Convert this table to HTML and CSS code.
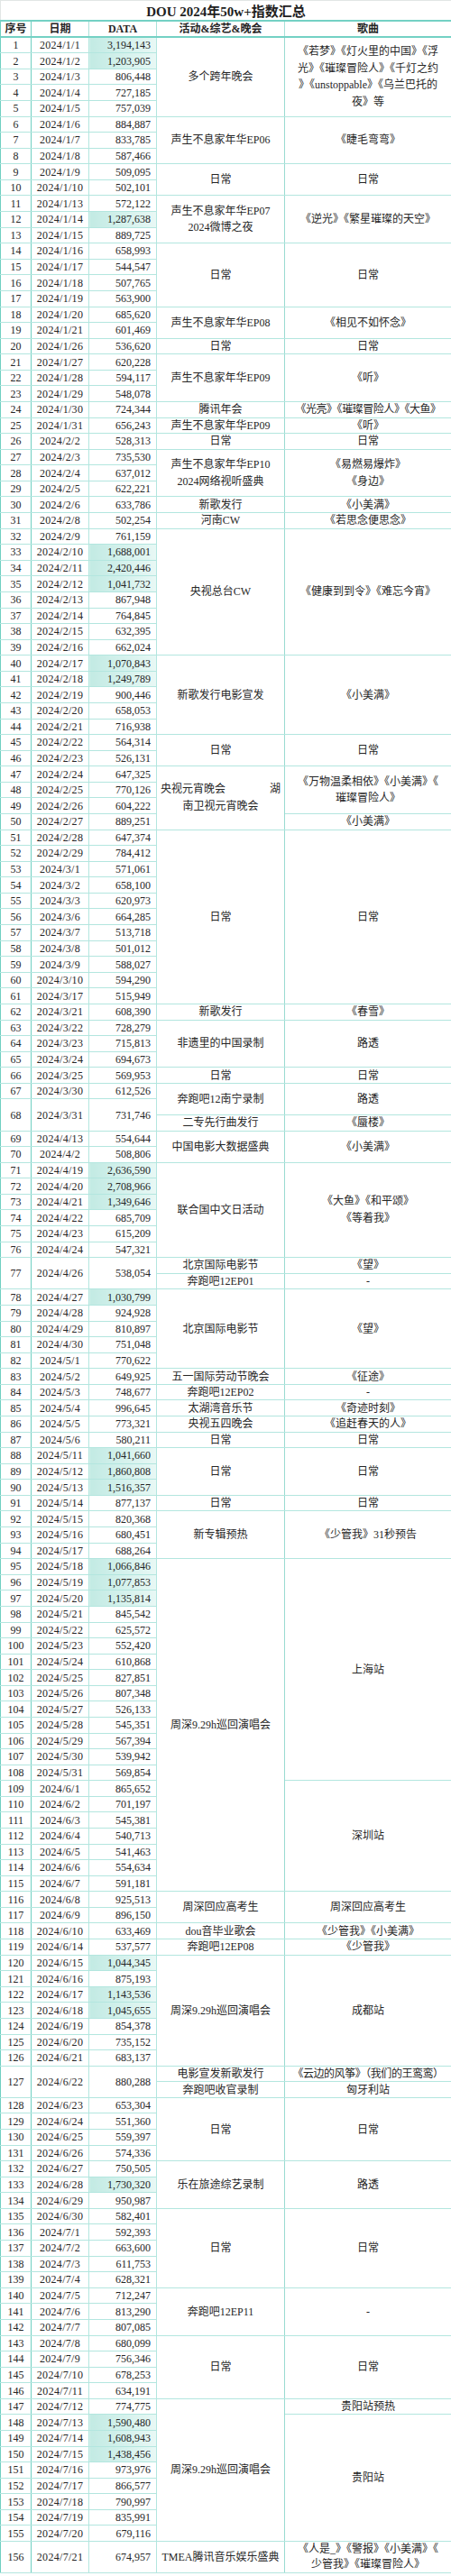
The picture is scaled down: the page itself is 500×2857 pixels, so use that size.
FILE: index.html
```html
<!DOCTYPE html>
<html lang="zh-CN">
<head>
<meta charset="utf-8">
<title>DOU 2024年50w+指数汇总</title>
<link rel="stylesheet" href="styles.css">
</head>
<body>
<table class="sheet">
<colgroup><col class="c1"><col class="c2"><col class="c3"><col class="c4"><col class="c5"></colgroup>
<thead>
<tr class="title"><th colspan="5">DOU 2024年50w+指数汇总</th></tr>
<tr class="head"><th class="n">序号</th><th>日期</th><th>DATA</th><th>活动&amp;综艺&amp;晚会</th><th class="s">歌曲</th></tr>
</thead>
<tbody>
<tr><td class="n">1</td><td class="d">2024/1/1</td><td class="v hi">3,194,143</td><td class="a" rowspan="5">多个跨年晚会</td><td class="s ml" rowspan="5">《若梦》《灯火里的中国》《浮<br>光》《璀璨冒险人》《千灯之约<br>》《unstoppable》《乌兰巴托的<br>夜》等</td></tr>
<tr><td class="n">2</td><td class="d">2024/1/2</td><td class="v hi">1,203,905</td></tr>
<tr><td class="n">3</td><td class="d">2024/1/3</td><td class="v">806,448</td></tr>
<tr><td class="n">4</td><td class="d">2024/1/4</td><td class="v">727,185</td></tr>
<tr><td class="n">5</td><td class="d">2024/1/5</td><td class="v">757,039</td></tr>
<tr><td class="n">6</td><td class="d">2024/1/6</td><td class="v">884,887</td><td class="a" rowspan="3">声生不息家年华EP06</td><td class="s" rowspan="3">《睫毛弯弯》</td></tr>
<tr><td class="n">7</td><td class="d">2024/1/7</td><td class="v">833,785</td></tr>
<tr><td class="n">8</td><td class="d">2024/1/8</td><td class="v">587,466</td></tr>
<tr><td class="n">9</td><td class="d">2024/1/9</td><td class="v">509,095</td><td class="a" rowspan="2">日常</td><td class="s" rowspan="2">日常</td></tr>
<tr><td class="n">10</td><td class="d">2024/1/10</td><td class="v">502,101</td></tr>
<tr><td class="n">11</td><td class="d">2024/1/13</td><td class="v">572,122</td><td class="a ml" rowspan="3">声生不息家年华EP07<br>2024微博之夜</td><td class="s" rowspan="3">《逆光》《繁星璀璨的天空》</td></tr>
<tr><td class="n">12</td><td class="d">2024/1/14</td><td class="v hi">1,287,638</td></tr>
<tr><td class="n">13</td><td class="d">2024/1/15</td><td class="v">889,725</td></tr>
<tr><td class="n">14</td><td class="d">2024/1/16</td><td class="v">658,993</td><td class="a" rowspan="4">日常</td><td class="s" rowspan="4">日常</td></tr>
<tr><td class="n">15</td><td class="d">2024/1/17</td><td class="v">544,547</td></tr>
<tr><td class="n">16</td><td class="d">2024/1/18</td><td class="v">507,765</td></tr>
<tr><td class="n">17</td><td class="d">2024/1/19</td><td class="v">563,900</td></tr>
<tr><td class="n">18</td><td class="d">2024/1/20</td><td class="v">685,620</td><td class="a" rowspan="2">声生不息家年华EP08</td><td class="s" rowspan="2">《相见不如怀念》</td></tr>
<tr><td class="n">19</td><td class="d">2024/1/21</td><td class="v">601,469</td></tr>
<tr><td class="n">20</td><td class="d">2024/1/26</td><td class="v">536,620</td><td class="a">日常</td><td class="s">日常</td></tr>
<tr><td class="n">21</td><td class="d">2024/1/27</td><td class="v">620,228</td><td class="a" rowspan="3">声生不息家年华EP09</td><td class="s" rowspan="3">《听》</td></tr>
<tr><td class="n">22</td><td class="d">2024/1/28</td><td class="v">594,117</td></tr>
<tr><td class="n">23</td><td class="d">2024/1/29</td><td class="v">548,078</td></tr>
<tr><td class="n">24</td><td class="d">2024/1/30</td><td class="v">724,344</td><td class="a">腾讯年会</td><td class="s tight">《光亮》《璀璨冒险人》《大鱼》</td></tr>
<tr><td class="n">25</td><td class="d">2024/1/31</td><td class="v">656,243</td><td class="a">声生不息家年华EP09</td><td class="s">《听》</td></tr>
<tr><td class="n">26</td><td class="d">2024/2/2</td><td class="v">528,313</td><td class="a">日常</td><td class="s">日常</td></tr>
<tr><td class="n">27</td><td class="d">2024/2/3</td><td class="v">735,530</td><td class="a ml" rowspan="3">声生不息家年华EP10<br>2024网络视听盛典</td><td class="s ml" rowspan="3">《易燃易爆炸》<br>《身边》</td></tr>
<tr><td class="n">28</td><td class="d">2024/2/4</td><td class="v">637,012</td></tr>
<tr><td class="n">29</td><td class="d">2024/2/5</td><td class="v">622,221</td></tr>
<tr><td class="n">30</td><td class="d">2024/2/6</td><td class="v">633,786</td><td class="a">新歌发行</td><td class="s">《小美满》</td></tr>
<tr><td class="n">31</td><td class="d">2024/2/8</td><td class="v">502,254</td><td class="a">河南CW</td><td class="s">《若思念便思念》</td></tr>
<tr><td class="n">32</td><td class="d">2024/2/9</td><td class="v">761,159</td><td class="a" rowspan="8">央视总台CW</td><td class="s" rowspan="8">《健康到到令》《难忘今宵》</td></tr>
<tr><td class="n">33</td><td class="d">2024/2/10</td><td class="v hi">1,688,001</td></tr>
<tr><td class="n">34</td><td class="d">2024/2/11</td><td class="v hi">2,420,446</td></tr>
<tr><td class="n">35</td><td class="d">2024/2/12</td><td class="v hi">1,041,732</td></tr>
<tr><td class="n">36</td><td class="d">2024/2/13</td><td class="v">867,948</td></tr>
<tr><td class="n">37</td><td class="d">2024/2/14</td><td class="v">764,845</td></tr>
<tr><td class="n">38</td><td class="d">2024/2/15</td><td class="v">632,395</td></tr>
<tr><td class="n">39</td><td class="d">2024/2/16</td><td class="v">662,024</td></tr>
<tr><td class="n">40</td><td class="d">2024/2/17</td><td class="v hi">1,070,843</td><td class="a" rowspan="5">新歌发行电影宣发</td><td class="s" rowspan="5">《小美满》</td></tr>
<tr><td class="n">41</td><td class="d">2024/2/18</td><td class="v hi">1,249,789</td></tr>
<tr><td class="n">42</td><td class="d">2024/2/19</td><td class="v">900,446</td></tr>
<tr><td class="n">43</td><td class="d">2024/2/20</td><td class="v">658,053</td></tr>
<tr><td class="n">44</td><td class="d">2024/2/21</td><td class="v">716,938</td></tr>
<tr><td class="n">45</td><td class="d">2024/2/22</td><td class="v">564,314</td><td class="a" rowspan="2">日常</td><td class="s" rowspan="2">日常</td></tr>
<tr><td class="n">46</td><td class="d">2024/2/23</td><td class="v">526,131</td></tr>
<tr><td class="n">47</td><td class="d">2024/2/24</td><td class="v">647,325</td><td class="a ml" rowspan="4"><span class="split"><span>央视元宵晚会</span><span>湖</span></span>南卫视元宵晚会</td><td class="s ml" rowspan="3">《万物温柔相依》《小美满》《<br>璀璨冒险人》</td></tr>
<tr><td class="n">48</td><td class="d">2024/2/25</td><td class="v">770,126</td></tr>
<tr><td class="n">49</td><td class="d">2024/2/26</td><td class="v">604,222</td></tr>
<tr><td class="n">50</td><td class="d">2024/2/27</td><td class="v">889,251</td><td class="s">《小美满》</td></tr>
<tr><td class="n">51</td><td class="d">2024/2/28</td><td class="v">647,374</td><td class="a" rowspan="11">日常</td><td class="s" rowspan="11">日常</td></tr>
<tr><td class="n">52</td><td class="d">2024/2/29</td><td class="v">784,412</td></tr>
<tr><td class="n">53</td><td class="d">2024/3/1</td><td class="v">571,061</td></tr>
<tr><td class="n">54</td><td class="d">2024/3/2</td><td class="v">658,100</td></tr>
<tr><td class="n">55</td><td class="d">2024/3/3</td><td class="v">620,973</td></tr>
<tr><td class="n">56</td><td class="d">2024/3/6</td><td class="v">664,285</td></tr>
<tr><td class="n">57</td><td class="d">2024/3/7</td><td class="v">513,718</td></tr>
<tr><td class="n">58</td><td class="d">2024/3/8</td><td class="v">501,012</td></tr>
<tr><td class="n">59</td><td class="d">2024/3/9</td><td class="v">588,027</td></tr>
<tr><td class="n">60</td><td class="d">2024/3/10</td><td class="v">594,290</td></tr>
<tr><td class="n">61</td><td class="d">2024/3/17</td><td class="v">515,949</td></tr>
<tr><td class="n">62</td><td class="d">2024/3/21</td><td class="v">608,390</td><td class="a">新歌发行</td><td class="s">《春雪》</td></tr>
<tr><td class="n">63</td><td class="d">2024/3/22</td><td class="v">728,279</td><td class="a" rowspan="3">非遗里的中国录制</td><td class="s" rowspan="3">路透</td></tr>
<tr><td class="n">64</td><td class="d">2024/3/23</td><td class="v">715,813</td></tr>
<tr><td class="n">65</td><td class="d">2024/3/24</td><td class="v">694,673</td></tr>
<tr><td class="n">66</td><td class="d">2024/3/25</td><td class="v">569,953</td><td class="a">日常</td><td class="s">日常</td></tr>
<tr><td class="n">67</td><td class="d">2024/3/30</td><td class="v">612,526</td><td class="a" rowspan="2">奔跑吧12南宁录制</td><td class="s" rowspan="2">路透</td></tr>
<tr><td class="n" rowspan="2">68</td><td class="d" rowspan="2">2024/3/31</td><td class="v" rowspan="2">731,746</td></tr>
<tr><td class="a">二专先行曲发行</td><td class="s">《蜃楼》</td></tr>
<tr><td class="n">69</td><td class="d">2024/4/13</td><td class="v">554,644</td><td class="a" rowspan="2">中国电影大数据盛典</td><td class="s" rowspan="2">《小美满》</td></tr>
<tr><td class="n">70</td><td class="d">2024/4/2</td><td class="v">508,806</td></tr>
<tr><td class="n">71</td><td class="d">2024/4/19</td><td class="v hi">2,636,590</td><td class="a" rowspan="6">联合国中文日活动</td><td class="s ml" rowspan="6">《大鱼》《和平颂》<br>《等着我》</td></tr>
<tr><td class="n">72</td><td class="d">2024/4/20</td><td class="v hi">2,708,966</td></tr>
<tr><td class="n">73</td><td class="d">2024/4/21</td><td class="v hi">1,349,646</td></tr>
<tr><td class="n">74</td><td class="d">2024/4/22</td><td class="v">685,709</td></tr>
<tr><td class="n">75</td><td class="d">2024/4/23</td><td class="v">615,209</td></tr>
<tr><td class="n">76</td><td class="d">2024/4/24</td><td class="v">547,321</td></tr>
<tr><td class="n" rowspan="2">77</td><td class="d" rowspan="2">2024/4/26</td><td class="v" rowspan="2">538,054</td><td class="a">北京国际电影节</td><td class="s">《望》</td></tr>
<tr><td class="a">奔跑吧12EP01</td><td class="s">-</td></tr>
<tr><td class="n">78</td><td class="d">2024/4/27</td><td class="v hi">1,030,799</td><td class="a" rowspan="5">北京国际电影节</td><td class="s" rowspan="5">《望》</td></tr>
<tr><td class="n">79</td><td class="d">2024/4/28</td><td class="v">924,928</td></tr>
<tr><td class="n">80</td><td class="d">2024/4/29</td><td class="v">810,897</td></tr>
<tr><td class="n">81</td><td class="d">2024/4/30</td><td class="v">751,048</td></tr>
<tr><td class="n">82</td><td class="d">2024/5/1</td><td class="v">770,622</td></tr>
<tr><td class="n">83</td><td class="d">2024/5/2</td><td class="v">649,925</td><td class="a">五一国际劳动节晚会</td><td class="s">《征途》</td></tr>
<tr><td class="n">84</td><td class="d">2024/5/3</td><td class="v">748,677</td><td class="a">奔跑吧12EP02</td><td class="s">-</td></tr>
<tr><td class="n">85</td><td class="d">2024/5/4</td><td class="v">996,645</td><td class="a">太湖湾音乐节</td><td class="s">《奇迹时刻》</td></tr>
<tr><td class="n">86</td><td class="d">2024/5/5</td><td class="v">773,321</td><td class="a">央视五四晚会</td><td class="s">《追赶春天的人》</td></tr>
<tr><td class="n">87</td><td class="d">2024/5/6</td><td class="v">580,211</td><td class="a">日常</td><td class="s">日常</td></tr>
<tr><td class="n">88</td><td class="d">2024/5/11</td><td class="v hi">1,041,660</td><td class="a" rowspan="3">日常</td><td class="s" rowspan="3">日常</td></tr>
<tr><td class="n">89</td><td class="d">2024/5/12</td><td class="v hi">1,860,808</td></tr>
<tr><td class="n">90</td><td class="d">2024/5/13</td><td class="v hi">1,516,357</td></tr>
<tr><td class="n">91</td><td class="d">2024/5/14</td><td class="v">877,137</td><td class="a">日常</td><td class="s">日常</td></tr>
<tr><td class="n">92</td><td class="d">2024/5/15</td><td class="v">820,368</td><td class="a" rowspan="3">新专辑预热</td><td class="s" rowspan="3">《少管我》31秒预告</td></tr>
<tr><td class="n">93</td><td class="d">2024/5/16</td><td class="v">680,451</td></tr>
<tr><td class="n">94</td><td class="d">2024/5/17</td><td class="v">688,264</td></tr>
<tr><td class="n">95</td><td class="d">2024/5/18</td><td class="v hi">1,066,846</td><td class="a" rowspan="21">周深9.29h巡回演唱会</td><td class="s" rowspan="14">上海站</td></tr>
<tr><td class="n">96</td><td class="d">2024/5/19</td><td class="v hi">1,077,853</td></tr>
<tr><td class="n">97</td><td class="d">2024/5/20</td><td class="v hi">1,135,814</td></tr>
<tr><td class="n">98</td><td class="d">2024/5/21</td><td class="v">845,542</td></tr>
<tr><td class="n">99</td><td class="d">2024/5/22</td><td class="v">625,572</td></tr>
<tr><td class="n">100</td><td class="d">2024/5/23</td><td class="v">552,420</td></tr>
<tr><td class="n">101</td><td class="d">2024/5/24</td><td class="v">610,868</td></tr>
<tr><td class="n">102</td><td class="d">2024/5/25</td><td class="v">827,851</td></tr>
<tr><td class="n">103</td><td class="d">2024/5/26</td><td class="v">807,348</td></tr>
<tr><td class="n">104</td><td class="d">2024/5/27</td><td class="v">526,133</td></tr>
<tr><td class="n">105</td><td class="d">2024/5/28</td><td class="v">545,351</td></tr>
<tr><td class="n">106</td><td class="d">2024/5/29</td><td class="v">567,394</td></tr>
<tr><td class="n">107</td><td class="d">2024/5/30</td><td class="v">539,942</td></tr>
<tr><td class="n">108</td><td class="d">2024/5/31</td><td class="v">569,854</td></tr>
<tr><td class="n">109</td><td class="d">2024/6/1</td><td class="v">865,652</td><td class="s" rowspan="7">深圳站</td></tr>
<tr><td class="n">110</td><td class="d">2024/6/2</td><td class="v">701,197</td></tr>
<tr><td class="n">111</td><td class="d">2024/6/3</td><td class="v">545,381</td></tr>
<tr><td class="n">112</td><td class="d">2024/6/4</td><td class="v">540,713</td></tr>
<tr><td class="n">113</td><td class="d">2024/6/5</td><td class="v">541,463</td></tr>
<tr><td class="n">114</td><td class="d">2024/6/6</td><td class="v">554,634</td></tr>
<tr><td class="n">115</td><td class="d">2024/6/7</td><td class="v">591,181</td></tr>
<tr><td class="n">116</td><td class="d">2024/6/8</td><td class="v">925,513</td><td class="a" rowspan="2">周深回应高考生</td><td class="s" rowspan="2">周深回应高考生</td></tr>
<tr><td class="n">117</td><td class="d">2024/6/9</td><td class="v">896,150</td></tr>
<tr><td class="n">118</td><td class="d">2024/6/10</td><td class="v">633,469</td><td class="a">dou音毕业歌会</td><td class="s">《少管我》《小美满》</td></tr>
<tr><td class="n">119</td><td class="d">2024/6/14</td><td class="v">537,577</td><td class="a">奔跑吧12EP08</td><td class="s">《少管我》</td></tr>
<tr><td class="n">120</td><td class="d">2024/6/15</td><td class="v hi">1,044,345</td><td class="a" rowspan="7">周深9.29h巡回演唱会</td><td class="s" rowspan="7">成都站</td></tr>
<tr><td class="n">121</td><td class="d">2024/6/16</td><td class="v">875,193</td></tr>
<tr><td class="n">122</td><td class="d">2024/6/17</td><td class="v hi">1,143,536</td></tr>
<tr><td class="n">123</td><td class="d">2024/6/18</td><td class="v hi">1,045,655</td></tr>
<tr><td class="n">124</td><td class="d">2024/6/19</td><td class="v">854,378</td></tr>
<tr><td class="n">125</td><td class="d">2024/6/20</td><td class="v">735,152</td></tr>
<tr><td class="n">126</td><td class="d">2024/6/21</td><td class="v">683,137</td></tr>
<tr><td class="n" rowspan="2">127</td><td class="d" rowspan="2">2024/6/22</td><td class="v" rowspan="2">880,288</td><td class="a">电影宣发新歌发行</td><td class="s tight">《云边的风筝》（我们的王鸾鸾）</td></tr>
<tr><td class="a">奔跑吧收官录制</td><td class="s">匈牙利站</td></tr>
<tr><td class="n">128</td><td class="d">2024/6/23</td><td class="v">653,304</td><td class="a" rowspan="4">日常</td><td class="s" rowspan="4">日常</td></tr>
<tr><td class="n">129</td><td class="d">2024/6/24</td><td class="v">551,360</td></tr>
<tr><td class="n">130</td><td class="d">2024/6/25</td><td class="v">559,397</td></tr>
<tr><td class="n">131</td><td class="d">2024/6/26</td><td class="v">574,336</td></tr>
<tr><td class="n">132</td><td class="d">2024/6/27</td><td class="v">750,505</td><td class="a" rowspan="3">乐在旅途综艺录制</td><td class="s" rowspan="3">路透</td></tr>
<tr><td class="n">133</td><td class="d">2024/6/28</td><td class="v hi">1,730,320</td></tr>
<tr><td class="n">134</td><td class="d">2024/6/29</td><td class="v">950,987</td></tr>
<tr><td class="n">135</td><td class="d">2024/6/30</td><td class="v">582,401</td><td class="a" rowspan="5">日常</td><td class="s" rowspan="5">日常</td></tr>
<tr><td class="n">136</td><td class="d">2024/7/1</td><td class="v">592,393</td></tr>
<tr><td class="n">137</td><td class="d">2024/7/2</td><td class="v">663,600</td></tr>
<tr><td class="n">138</td><td class="d">2024/7/3</td><td class="v">611,753</td></tr>
<tr><td class="n">139</td><td class="d">2024/7/4</td><td class="v">628,321</td></tr>
<tr><td class="n">140</td><td class="d">2024/7/5</td><td class="v">712,247</td><td class="a" rowspan="3">奔跑吧12EP11</td><td class="s" rowspan="3">-</td></tr>
<tr><td class="n">141</td><td class="d">2024/7/6</td><td class="v">813,290</td></tr>
<tr><td class="n">142</td><td class="d">2024/7/7</td><td class="v">807,085</td></tr>
<tr><td class="n">143</td><td class="d">2024/7/8</td><td class="v">680,099</td><td class="a" rowspan="4">日常</td><td class="s" rowspan="4">日常</td></tr>
<tr><td class="n">144</td><td class="d">2024/7/9</td><td class="v">756,346</td></tr>
<tr><td class="n">145</td><td class="d">2024/7/10</td><td class="v">678,253</td></tr>
<tr><td class="n">146</td><td class="d">2024/7/11</td><td class="v">634,191</td></tr>
<tr><td class="n">147</td><td class="d">2024/7/12</td><td class="v">774,775</td><td class="a" rowspan="9">周深9.29h巡回演唱会</td><td class="s">贵阳站预热</td></tr>
<tr><td class="n">148</td><td class="d">2024/7/13</td><td class="v hi">1,590,480</td><td class="s" rowspan="8">贵阳站</td></tr>
<tr><td class="n">149</td><td class="d">2024/7/14</td><td class="v hi">1,608,943</td></tr>
<tr><td class="n">150</td><td class="d">2024/7/15</td><td class="v hi">1,438,456</td></tr>
<tr><td class="n">151</td><td class="d">2024/7/16</td><td class="v">973,976</td></tr>
<tr><td class="n">152</td><td class="d">2024/7/17</td><td class="v">866,577</td></tr>
<tr><td class="n">153</td><td class="d">2024/7/18</td><td class="v">790,997</td></tr>
<tr><td class="n">154</td><td class="d">2024/7/19</td><td class="v">835,991</td></tr>
<tr><td class="n">155</td><td class="d">2024/7/20</td><td class="v">679,116</td></tr>
<tr class="dbl"><td class="n">156</td><td class="d">2024/7/21</td><td class="v">674,957</td><td class="a">TMEA腾讯音乐娱乐盛典</td><td class="s ml tl">《人是_》《警报》《小美满》《<br>少管我》《璀璨冒险人》</td></tr>
</tbody>
</table>
</body>
</html>
```

FILE: styles.css
```css
html, body {
  margin: 0;
  padding: 0;
  background: #ffffff;
}

body {
  font-family: "Liberation Serif", "Noto Sans CJK SC", serif;
  color: #262626;
}

.sheet {
  width: 500px;
  table-layout: fixed;
  border-collapse: collapse;
  font-size: 12px;
}

.c1 { width: 34px; }
.c2 { width: 64px; }
.c3 { width: 75px; }
.c4 { width: 142px; }
.c5 { width: 185px; }

.sheet tbody tr { height: 17.59px; }
.sheet tbody tr.dbl { height: 35.18px; }

.title { height: 22px; }
.title th {
  padding: 3px 0 0;
  font-size: 15px;
  font-weight: 700;
  color: #1e1e1e;
  line-height: 16px;
  border-top: 1px solid #e2e6e5;
  border-left: 1px solid #e2e6e5;
  border-right: 1px solid #e2e6e5;
  border-bottom: 2px solid #74d1c4;
}

.head { height: 18.7px; }
.head th {
  padding: 0;
  font-weight: 700;
  color: #262626;
  line-height: 14px;
  border: 1px solid #a9e2da;
  border-top: 2px solid #74d1c4;
  border-bottom: 2px solid #74d1c4;
}

.sheet td {
  padding: 0;
  text-align: center;
  vertical-align: middle;
  white-space: nowrap;
  line-height: 14px;
  border: 1px solid #b3e6df;
}

.sheet .n {
  border-left: 1px solid #6fcfc1;
  border-right: 1px solid #6fcfc1;
}

.sheet .d { letter-spacing: 0.3px; }

.sheet .v {
  text-align: right;
  padding-right: 6px;
}

.sheet .v.hi {
  background: linear-gradient(90deg, #c2eae3 0%, #d6f2ed 55%, #e8f8f5 100%);
}

.sheet .a {
  padding: 0 4px;
  border-right-color: #9adbd1;
}

.sheet .s {
  padding: 0 3px;
  border-right: 1px solid #8fd7cc;
}

.sheet .ml { line-height: 18.5px; }
.sheet .tl { line-height: 17px; }
.sheet .tight { letter-spacing: -0.45px; }

.split {
  display: flex;
  justify-content: space-between;
}
```
